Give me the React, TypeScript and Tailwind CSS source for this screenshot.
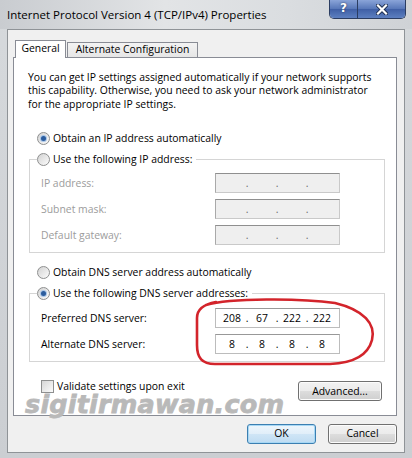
import { Fragment } from 'react';
import clsx from 'clsx';

// radio button, win7 style
function Radio({ checked }: { checked?: boolean }) {
  return (
    <span className="flex h-[13px] w-[13px] shrink-0 items-center justify-center rounded-full border border-[#8e8f8f] bg-[linear-gradient(135deg,#d2d2d2,#fcfcfc)]">
      {checked && <span className="h-[5px] w-[5px] rounded-full bg-[#2c5d9e] shadow-[0_0_0_1px_#a9c6e8]" />}
    </span>
  );
}

function IpField({ parts, disabled }: { parts?: string[]; disabled?: boolean }) {
  const segs = parts ?? ['', '', '', ''];
  return (
    <div
      className={clsx(
        'flex h-[20px] w-[125px] shrink-0 items-center border pl-[3px]',
        disabled
          ? 'border-[#c9c9c9] border-t-[#8f8f8f] border-l-[#a9a9a9] bg-[#efefef] text-[#6a6a6a]'
          : 'border-[#bcbcbc] border-t-[#989898] bg-white text-black'
      )}
    >
      {segs.map((p, i) => (
        <Fragment key={i}>
          {i > 0 && <span className="w-[4px] text-center">.</span>}
          <span className="w-[26px] text-center">{p}</span>
        </Fragment>
      ))}
    </div>
  );
}

function FieldRow({ label, parts, disabled }: { label: string; parts?: string[]; disabled?: boolean }) {
  return (
    <div className="flex h-[20px] items-center">
      <span className={clsx('w-[174px]', disabled ? 'text-[#9c9c9c]' : 'text-black')}>{label}</span>
      <IpField parts={parts} disabled={disabled} />
    </div>
  );
}

function Button({ children, width, primary }: { children: string; width: string; primary?: boolean }) {
  return (
    <button
      className={clsx(
        'flex h-[20px] items-center justify-center rounded-[3px] border',
        width,
        primary
          ? 'border-[#3c7fb1] bg-[linear-gradient(to_bottom,#eef6fc_0%,#e0eef9_50%,#cfe5f6_51%,#bfdcf2_100%)] shadow-[inset_0_0_0_1px_#a7d8f5]'
          : 'border-[#707070] bg-[linear-gradient(to_bottom,#f2f2f2_0%,#ebebeb_50%,#dddddd_51%,#cfcfcf_100%)] shadow-[inset_0_0_0_1px_#fcfcfc]'
      )}
    >
      {children}
    </button>
  );
}

export default function App() {
  return (
    <div className="relative flex h-[458px] w-[412px] flex-col overflow-hidden bg-[linear-gradient(to_bottom,#d6d9dc,#cbced2)] font-['Open_Sans',sans-serif] text-[10.4px] leading-[13.4px] text-black">
      {/* title bar */}
      <div className="flex h-[29px] shrink-0 items-start justify-between bg-[linear-gradient(to_right,#c9ccd0,#e2e4e6_40%,#dadde0_70%,#cfd2d6)]">
        <span className="pl-[7px] pt-[8px] text-[11.5px] leading-[14px] text-black">
          Internet Protocol Version 4 (TCP/IPv4) Properties
        </span>
        <div className="mr-[6px] flex h-[19px] overflow-hidden rounded-b-[5px] border border-t-0 border-[#2b3d62]">
          <div className="flex w-[28px] items-center justify-center border-r border-[#2b3d62] bg-[linear-gradient(to_bottom,#8aa4d8,#5676b8_50%,#3f5fa5_51%,#5c7fc0)] font-['DejaVu_Sans',sans-serif] text-[12px] font-bold text-white [text-shadow:0_0_2px_#1c2c4c]">
            ?
          </div>
          <div className="flex w-[47px] items-center justify-center bg-[linear-gradient(to_bottom,#8aa4d8,#5676b8_50%,#3f5fa5_51%,#5c7fc0)]">
            <svg width="12" height="11" viewBox="0 0 12 11">
              <path d="M2 1.5 L10 9.5 M10 1.5 L2 9.5" stroke="#1c2c4c" strokeWidth="4" strokeLinecap="square" />
              <path d="M2 1.5 L10 9.5 M10 1.5 L2 9.5" stroke="#ffffff" strokeWidth="2.2" strokeLinecap="square" />
            </svg>
          </div>
        </div>
      </div>

      {/* client area */}
      <div className="mx-[7px] flex h-[424px] shrink-0 flex-col border border-[#8f9397] bg-[#f0f0f0]">
        {/* tabs */}
        <div className="flex h-[27px] shrink-0 items-end pl-[7px]">
          <div className="relative z-10 -mb-px flex h-[18px] w-[51px] items-center justify-center border border-b-0 border-[#898c95] bg-white pb-[1px]">
            General
          </div>
          <div className="ml-[1px] flex h-[15px] w-[131px] items-center justify-center border border-b-0 border-[#898c95] bg-[linear-gradient(to_bottom,#f3f3f3,#e6e6e6)]">
            Alternate Configuration
          </div>
        </div>

        {/* panel */}
        <div className="ml-[5px] flex h-[359px] w-[384px] shrink-0 flex-col border border-[#898c95] bg-white pl-[14px] pt-[13px]">
          <p className="whitespace-nowrap">
            You can get IP settings assigned automatically if your network supports
            <br />
            this capability. Otherwise, you need to ask your network administrator
            <br />
            for the appropriate IP settings.
          </p>

          <div className="ml-[9px] mt-[19px] flex h-[16px] items-center gap-[3px]">
            <Radio checked />
            <span>Obtain an IP address automatically</span>
          </div>

          <fieldset className="ml-[1px] mt-[5px] w-[356px] shrink-0 border border-[#d5d5d5] px-[7px] pb-[7px] pt-[6px]">
            <legend className="pr-[4px]">
              <span className="flex h-[16px] items-center gap-[3px]">
                <Radio />
                <span>Use the following IP address:</span>
              </span>
            </legend>
            <div className="flex flex-col gap-[6px] pl-[4px]">
              <FieldRow label="IP address:" disabled />
              <FieldRow label="Subnet mask:" disabled />
              <FieldRow label="Default gateway:" disabled />
            </div>
          </fieldset>

          <div className="ml-[9px] mt-[11px] flex h-[16px] items-center gap-[3px]">
            <Radio />
            <span>Obtain DNS server address automatically</span>
          </div>

          <fieldset className="ml-[1px] mt-[5px] w-[356px] shrink-0 border border-[#d5d5d5] px-[7px] pb-[7px] pt-[7px]">
            <legend className="pr-[4px]">
              <span className="flex h-[16px] items-center gap-[3px]">
                <Radio checked />
                <span>Use the following DNS server addresses:</span>
              </span>
            </legend>
            <div className="flex flex-col gap-[6px] pl-[4px]">
              <FieldRow label="Preferred DNS server:" parts={['208', '67', '222', '222']} />
              <FieldRow label="Alternate DNS server:" parts={['8', '8', '8', '8']} />
            </div>
          </fieldset>

          <div className="ml-[13px] mt-[16px] flex items-start justify-between pr-[14px]">
            <div className="flex h-[16px] items-center gap-[3px]">
              <span className="h-[13px] w-[13px] border border-[#8e8f8f] bg-[linear-gradient(135deg,#d6d6d6,#fbfbfb)]" />
              <span className="leading-[12px]">Validate settings upon exit</span>
            </div>
            <div className="mt-[3px]">
              <Button width="w-[84px] h-[19px]">Advanced...</Button>
            </div>
          </div>
        </div>

        {/* dialog buttons */}
        <div className="mr-[7px] mt-[8px] flex justify-end gap-[12px]">
          <Button width="w-[69px]" primary>
            OK
          </Button>
          <Button width="w-[69px]">Cancel</Button>
        </div>
      </div>

      {/* watermark */}
      <span className="pointer-events-none absolute left-[25px] top-[395px] font-['DejaVu_Sans',sans-serif] text-[25.5px] font-bold italic leading-[18px] tracking-[0.2px] text-[#b9b9b9] [-webkit-text-stroke:0.8px_#b9b9b9]">
        sigitirmawan.com
      </span>

      {/* hand-drawn red circle */}
      <svg className="pointer-events-none absolute inset-0" width="412" height="458" viewBox="0 0 412 458">
        <path
          d="M206 305 C230 298 300 298 335 303 C364 310 376 324 372 340 C368 355 355 363 330 364 L215 364 C202 364 197 358 197 345 L197 318 C197 308 205 304 216 302"
          fill="none"
          stroke="#d3242b"
          strokeWidth="2.6"
          strokeLinecap="round"
          strokeLinejoin="round"
        />
      </svg>
    </div>
  );
}
